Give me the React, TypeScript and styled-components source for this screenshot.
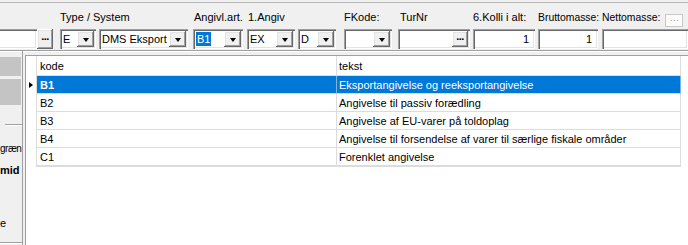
import React, { ReactElement } from "react";
import styled, { createGlobalStyle, css } from "styled-components";

const GlobalStyle = createGlobalStyle`
  body {
    margin: 0;
    background: #f0f0f0;
    font-family: "Liberation Sans", Arial, sans-serif;
    font-size: 11px;
    color: #000;
  }
`;

const Screen = styled.div`
  display: flex;
  flex-direction: column;

  width: 688px;
  height: 245px;
  overflow: hidden;

  background-color: #f0f0f0;
`;

/* ---------- toolbar ---------- */

const Toolbar = styled.div`
  display: flex;

  margin-top: 2px;
  padding-bottom: 1px;

  border-top: 1px solid #b9b9b9;
  border-bottom: 1px solid #a0a0a0;
  box-shadow: 0 1px 0 #ffffff;
`;

const Field = styled.div<{ $w?: number }>`
  display: flex;
  flex-direction: column;
  flex: ${(p) => (p.$w ? `0 0 ${p.$w}px` : "1 1 auto")};
  min-width: 0;
`;

const LabelRow = styled.div`
  display: flex;
  align-items: flex-start;
  gap: 5px;

  height: 26px;
  padding-top: 8px;
  box-sizing: border-box;
`;

const Label = styled.span<{ $indent?: number; $size?: number }>`
  padding-left: ${(p) => p.$indent ?? 0}px;
  font-size: ${(p) => p.$size ?? 11}px;
  line-height: 13px;
  white-space: nowrap;
`;

const Controls = styled.div<{ $gap?: number }>`
  display: flex;
  gap: ${(p) => p.$gap ?? 3}px;
  height: 20px;
`;

const sunken = css`
  box-sizing: border-box;
  background-color: #ffffff;
  box-shadow: inset 1px 1px 0 #a0a0a0, inset 2px 2px 0 #696969,
    inset -1px -1px 0 #ffffff, inset -2px -2px 0 #e3e3e3;
`;

const raised = css`
  box-sizing: border-box;
  background-color: #f0f0f0;
  box-shadow: inset -1px -1px 0 #696969, inset 1px 1px 0 #ffffff,
    inset -2px -2px 0 #a0a0a0, inset 2px 2px 0 #e3e3e3;
`;

const Combo = styled.div<{ $w: number }>`
  ${sunken};
  display: flex;
  align-items: center;

  width: ${(p) => p.$w}px;
  height: 20px;
  padding: 2px;
`;

const ComboText = styled.div`
  flex: 1;
  padding-left: 1px;
  line-height: 16px;
  white-space: nowrap;
  overflow: hidden;
`;

const Selected = styled.span`
  padding: 1px 1px;
  background-color: #0078d7;
  color: #ffffff;
`;

const ComboButton = styled.div`
  ${raised};
  display: flex;
  align-items: center;
  justify-content: center;

  width: 17px;
  height: 16px;

  &::after {
    content: "";
    margin-top: 1px;
    border-top: 4px solid #000;
    border-left: 3.5px solid transparent;
    border-right: 3.5px solid transparent;
  }
`;

const TextBox = styled.div<{ $w?: number; $clipped?: boolean; $right?: boolean }>`
  ${sunken};
  display: flex;
  align-items: center;
  justify-content: ${(p) => (p.$right ? "flex-end" : "flex-start")};

  width: ${(p) => (p.$w ? `${p.$w}px` : "auto")};
  flex: ${(p) => (p.$w ? "0 0 auto" : "1 1 auto")};
  height: 20px;
  padding: 2px 6px 2px 3px;

  ${(p) =>
    p.$clipped &&
    css`
      box-shadow: inset 0 1px 0 #a0a0a0, inset 0 2px 0 #696969,
        inset -1px -1px 0 #ffffff, inset -2px -2px 0 #e3e3e3;
    `}
`;

const EllipsisButton = styled.div<{ $small?: boolean }>`
  ${raised};
  display: flex;
  align-items: center;
  justify-content: center;

  width: 16px;
  height: ${(p) => (p.$small ? 16 : 20)}px;
  margin-left: ${(p) => (p.$small ? "auto" : "0")};
  margin-right: ${(p) => (p.$small ? "-4px" : "0")};

  font-weight: bold;
  font-size: 11px;
  line-height: 11px;
  letter-spacing: -0.5px;
  padding-bottom: 5px;
`;

const TinyButton = styled.div`
  display: flex;
  align-items: center;
  justify-content: center;

  width: 18px;
  height: 13px;
  margin-top: 3px;
  box-sizing: border-box;

  border: 1px solid #c8c8c8;
  background-color: #fbfbfb;
  color: #9a9a9a;
  font-size: 9px;
  line-height: 9px;
`;

/* ---------- body ---------- */

const Body = styled.div`
  display: flex;
  flex: 1;
  min-height: 0;
`;

const SidePanel = styled.div`
  display: flex;
  flex-direction: column;

  flex: 0 0 22px;
  border-right: 1px solid #a0a0a0;
  overflow: hidden;
`;

const SideBlock = styled.div<{ $h: number; $top: number }>`
  width: 21px;
  height: ${(p) => p.$h}px;
  margin-top: ${(p) => p.$top}px;
  background-color: #c4c4c4;
`;

const SideRule = styled.div<{ $top: number; $left?: number }>`
  height: 1px;
  margin-top: ${(p) => p.$top}px;
  margin-left: ${(p) => p.$left ?? 0}px;
  background-color: #a0a0a0;
  box-shadow: 0 1px 0 #ffffff;
`;

const SideText = styled.div<{ $top: number; $bold?: boolean; $size?: number }>`
  margin-top: ${(p) => p.$top}px;
  font-size: ${(p) => p.$size ?? 11}px;
  line-height: 13px;
  font-weight: ${(p) => (p.$bold ? "bold" : "normal")};
  letter-spacing: ${(p) => (p.$size ? "-0.5px" : "0")};
  white-space: nowrap;
`;

const GridBox = styled.div`
  flex: 1;
  margin: 4px 0 0 2px;

  border-top: 1px solid #a0a0a0;
  border-left: 1px solid #a0a0a0;
  background-color: #ffffff;
`;

const GridRow = styled.div<{ $h: number }>`
  display: grid;
  grid-template-columns: 11px 300px 344px;
  height: ${(p) => p.$h}px;
`;

const RowHead = styled.div`
  display: flex;
  align-items: center;

  padding-left: 3px;
  border-right: 1px solid #dcdcdc;
`;

const Arrow = styled.span`
  border-left: 4px solid #000;
  border-top: 3.5px solid transparent;
  border-bottom: 3.5px solid transparent;
`;

const Cell = styled.div<{ $active?: boolean; $bold?: boolean; $pad: number; $last?: boolean }>`
  display: flex;
  align-items: center;

  padding-left: ${(p) => p.$pad}px;
  border-right: 1px solid ${(p) => (p.$active ? "#7fb4e6" : "#dcdcdc")};
  border-bottom: ${(p) => (p.$last ? "2px" : "1px")} solid #dcdcdc;

  background-color: ${(p) => (p.$active ? "#0078d7" : "transparent")};
  color: ${(p) => (p.$active ? "#ffffff" : "#000000")};
  font-weight: ${(p) => (p.$bold ? "bold" : "normal")};
  white-space: nowrap;
  overflow: hidden;
`;

type Entry = { kode: string; tekst: string };

const entries: Entry[] = [
  { kode: "B1", tekst: "Eksportangivelse og reeksportangivelse" },
  { kode: "B2", tekst: "Angivelse til passiv forædling" },
  { kode: "B3", tekst: "Angivelse af EU-varer på toldoplag" },
  { kode: "B4", tekst: "Angivelse til forsendelse af varer til særlige fiskale områder" },
  { kode: "C1", tekst: "Forenklet angivelse" },
];

const ComboBox = ({ w, children }: { w: number; children?: React.ReactNode }): ReactElement => (
  <Combo $w={w}>
    <ComboText>{children}</ComboText>
    <ComboButton />
  </Combo>
);

const App = (): ReactElement => {
  return (
    <Screen>
      <GlobalStyle />

      <Toolbar>
        <Field $w={60}>
          <LabelRow />
          <Controls $gap={0}>
            <TextBox $w={37} $clipped />
            <EllipsisButton>...</EllipsisButton>
          </Controls>
        </Field>

        <Field $w={133}>
          <LabelRow>
            <Label>Type / System</Label>
          </LabelRow>
          <Controls>
            <ComboBox w={36}>E</ComboBox>
            <ComboBox w={89}>DMS Eksport</ComboBox>
          </Controls>
        </Field>

        <Field $w={54}>
          <LabelRow>
            <Label $indent={1}>Angivl.art.</Label>
          </LabelRow>
          <Controls>
            <ComboBox w={50}>
              <Selected>B1</Selected>
            </ComboBox>
          </Controls>
        </Field>

        <Field $w={51}>
          <LabelRow>
            <Label $indent={1}>1.Angiv</Label>
          </LabelRow>
          <Controls>
            <ComboBox w={48}>EX</ComboBox>
          </Controls>
        </Field>

        <Field $w={46}>
          <LabelRow />
          <Controls>
            <ComboBox w={38}>D</ComboBox>
          </Controls>
        </Field>

        <Field $w={54}>
          <LabelRow>
            <Label>FKode:</Label>
          </LabelRow>
          <Controls>
            <ComboBox w={48} />
          </Controls>
        </Field>

        <Field $w={75}>
          <LabelRow>
            <Label $indent={2}>TurNr</Label>
          </LabelRow>
          <Controls>
            <TextBox $w={72}>
              <EllipsisButton $small>...</EllipsisButton>
            </TextBox>
          </Controls>
        </Field>

        <Field $w={65}>
          <LabelRow>
            <Label>6.Kolli i alt:</Label>
          </LabelRow>
          <Controls>
            <TextBox $w={62} $right>
              1
            </TextBox>
          </Controls>
        </Field>

        <Field $w={64}>
          <LabelRow>
            <Label $size={10.4}>Bruttomasse:</Label>
          </LabelRow>
          <Controls>
            <TextBox $w={60} $right>
              1
            </TextBox>
          </Controls>
        </Field>

        <Field>
          <LabelRow>
            <Label $size={10.4}>Nettomasse:</Label>
            <TinyButton>···</TinyButton>
          </LabelRow>
          <Controls>
            <TextBox />
          </Controls>
        </Field>
      </Toolbar>

      <Body>
        <SidePanel>
          <SideBlock $h={19} $top={6} />
          <SideBlock $h={26} $top={3} />
          <SideRule $top={19} $left={5} />
          <SideText $top={17} $size={10}>
            græn
          </SideText>
          <SideText $top={9} $bold>
            mid
          </SideText>
          <SideText $top={40}>e</SideText>
          <SideRule $top={12} />
        </SidePanel>

        <GridBox>
          <GridRow $h={20}>
            <RowHead />
            <Cell $pad={3}>kode</Cell>
            <Cell $pad={2}>tekst</Cell>
          </GridRow>
          {entries.map((entry, i) => {
            const active = i === 0;
            const last = i === entries.length - 1;
            return (
              <GridRow key={entry.kode} $h={last ? 19 : 18}>
                <RowHead>{active ? <Arrow /> : null}</RowHead>
                <Cell $pad={3} $active={active} $bold={active} $last={last}>
                  {entry.kode}
                </Cell>
                <Cell $pad={2} $active={active} $last={last}>
                  {entry.tekst}
                </Cell>
              </GridRow>
            );
          })}
        </GridBox>
      </Body>
    </Screen>
  );
};

export default App;
